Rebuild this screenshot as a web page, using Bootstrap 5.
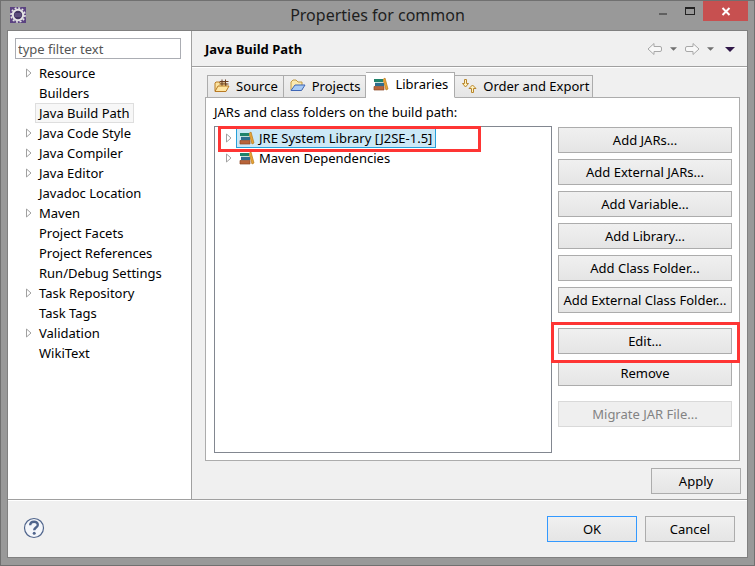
<!DOCTYPE html>
<html lang="en">
<head>
<meta charset="utf-8">
<meta name="viewport" content="width=device-width, initial-scale=1">
<title>Properties for common</title>
<link href="https://cdn.jsdelivr.net/npm/bootstrap@5.3.0/dist/css/bootstrap.min.css" rel="stylesheet">
<style>
body{font:13px/20px "Noto Sans","Open Sans",sans-serif;color:#000;background:#999}
.frame{min-height:100vh;background:#999;border:1px solid #707070;padding:0 6px 7px}
.titlebar{height:29px;padding:0 19px 0 3px}
.titlebar h1{font-size:16px;line-height:29px;color:#1e1e1e}
.winctl{border:0;background:none;padding:0;width:28px;height:20px;line-height:0}
.winctl.closer{background:#c75050;width:45px}
.winbox{top:0;right:0}
.dialog{background:#f0f0f0;border:1px solid #808080}
.side{width:184px;background:#fff;border-right:1px solid #a0a0a0;padding:7px 10px 0 7px;flex:none}
.filter{height:21px;border:1px solid #abadb3;border-radius:0;padding:0 2px;font-size:13px;line-height:19px;width:100%}
.filter::placeholder{color:#555;opacity:1}
.tree{padding-top:4px}
.tree li,.libs li{height:20px}
.twisty{width:20px;line-height:0;padding-left:11px;flex:none}
.libs .twisty{padding-left:10px}
.node{border:1px solid transparent;padding:0 3px;line-height:18px;color:#000;text-decoration:none;white-space:nowrap}
.node.current{background:#f7f7f7;border-color:#dedede}
.pagehead{height:36px;border-bottom:1px solid #a0a0a0;box-shadow:0 1px #fff;padding:1px 12px 0 13px}
.pagehead h2{font-size:13px;line-height:20px}
.pagehead button{border:0;background:none;padding:0;line-height:0}
.navset{gap:7px}
.page{padding:5px 6px 5px 13px}
.sheetwrap{padding-right:1px}
.tabs{padding-left:2px;margin-bottom:-1px;position:relative}
.tabs button{height:23px;border:1px solid #acacac;border-left-width:0;background:linear-gradient(#f0f0f0,#e5e5e5);padding:0 5px 1px 6px;display:flex;align-items:center;gap:6px;white-space:nowrap;color:#000}
.tabs button:first-child{border-left-width:1px}
.tabs button:last-child{padding-right:3px}
.tabs button.active{height:26px;background:#fff;border-bottom-color:#fff;padding:0 6px 3px 7px}
.sheet{background:#fff;border:1px solid #acacac;padding:4px 7px 7px 8px}
.libs{border:1px solid #828790;padding:1px 0 0 1px}
.libs .node{padding:0 3px 0 2px;display:flex;align-items:center;gap:4px;height:20px}
.libs .node.picked{background:#cbe8f6;border-color:#26a0da}
.workarea{gap:6px}
.actions{width:174px;gap:6px;flex:none;padding-top:1px}
.cmd{height:26px;border:1px solid #acacac;border-radius:0;background:linear-gradient(#f0f0f0,#e5e5e5);color:#000;padding:0;font-size:13px;line-height:20px;white-space:nowrap}
.cmd:disabled{background:#efefef;border-color:#d9d9d9;color:#838383;opacity:1}
.cmd.go{border-color:#3399ff}
.w90{width:90px}
.gap-top{margin-top:9px}
.applyrow{padding-top:7px}
.ring{position:absolute;border:3px solid #fe3534;pointer-events:none}
.ring-lib{left:4px;top:0;width:263px;height:26px;z-index:2}
.ring-edit{inset:-6px -8px -9px -7px}
.footer-bar{border-top:1px solid #a0a0a0;box-shadow:inset 0 1px #fff;height:58px;padding:0 12px 0 15px}
.help{border:0;background:none;padding:0 0 2px;line-height:0}
</style>
<script src="https://cdn.jsdelivr.net/npm/bootstrap@5.3.0/dist/js/bootstrap.bundle.min.js"></script>
</head>
<body>
<svg class="d-none" aria-hidden="true">
<symbol id="tw" viewBox="0 0 6 10"><path d="M.5 1v8L5 5z" fill="#fff" stroke="#a0a0a0"/></symbol>
<symbol id="books" viewBox="0 0 16 14"><path d="M10 2.500l2-1.500 3 11-2 1z" fill="#e8a536" stroke="#b87818" stroke-width=".7"/><path d="M1 2h9v3H1z" fill="#21836b"/><path d="M2 6h9v3H2z" fill="#2f6d8e"/><path d="M2 5.500h8" stroke="#b9d8d0" stroke-width=".8"/><path d="M1 9.500h10V13H1z" fill="#b8643a" stroke="#8b4522" stroke-width=".7"/></symbol>
<symbol id="back" viewBox="0 0 16 14"><path d="M1 7l6-5.500v3h6q1.500 0 1.500 1.500v2q0 1.500-1.500 1.500H7v3z" fill="#f8f8f8" stroke="#a8a8a8"/></symbol>
<symbol id="down" viewBox="0 0 8 4"><path d="M0 0h8L4 4z"/></symbol>
</svg>
<div class="frame d-flex flex-column">
<header class="titlebar d-flex position-relative">
<svg class="mt-1" width="16" height="20" viewBox="0 0 16 20"><path fill="#5b4381" d="M0 2h16v16H0z"/><circle cx="8" cy="10" r="7" fill="none" stroke="#e4e4e4" stroke-width="1.600" stroke-dasharray="2 1.660"/><circle cx="8" cy="10" r="5.200" fill="#41335f" stroke="#e4e4e4" stroke-width="2"/><path d="M4.500 9h7M4.500 11h7" stroke="#7b6a9c"/></svg>
<h1 class="flex-grow-1 text-center m-0 fw-normal">Properties for common</h1>
<div class="winbox position-absolute d-flex">
<button class="winctl" aria-label="Minimize"><svg width="28" height="20"><path d="M12 12h8v2h-8z" fill="#606060"/></svg></button>
<button class="winctl" aria-label="Maximize"><svg width="28" height="20"><path d="M10 6h10v8H10zM11 8v5h8V8z" fill="#222" fill-rule="evenodd"/></svg></button>
<button class="winctl closer" aria-label="Close"><svg width="45" height="20"><path d="M19.500 7l7 7M26.500 7l-7 7" stroke="#fff" stroke-width="2"/></svg></button>
</div>
</header>
<main class="dialog d-flex flex-column flex-grow-1">
<div class="d-flex flex-grow-1">
<nav class="side" aria-label="Property pages">
<input class="filter d-block" type="text" placeholder="type filter text" aria-label="Filter">
<ul class="tree list-unstyled m-0">
<li class="d-flex align-items-center"><span class="twisty"><svg width="6" height="10"><use href="#tw"/></svg></span><a class="node" href="#">Resource</a></li>
<li class="d-flex align-items-center"><span class="twisty"></span><a class="node" href="#">Builders</a></li>
<li class="d-flex align-items-center"><span class="twisty"></span><a class="node current" href="#">Java Build Path</a></li>
<li class="d-flex align-items-center"><span class="twisty"><svg width="6" height="10"><use href="#tw"/></svg></span><a class="node" href="#">Java Code Style</a></li>
<li class="d-flex align-items-center"><span class="twisty"><svg width="6" height="10"><use href="#tw"/></svg></span><a class="node" href="#">Java Compiler</a></li>
<li class="d-flex align-items-center"><span class="twisty"><svg width="6" height="10"><use href="#tw"/></svg></span><a class="node" href="#">Java Editor</a></li>
<li class="d-flex align-items-center"><span class="twisty"></span><a class="node" href="#">Javadoc Location</a></li>
<li class="d-flex align-items-center"><span class="twisty"><svg width="6" height="10"><use href="#tw"/></svg></span><a class="node" href="#">Maven</a></li>
<li class="d-flex align-items-center"><span class="twisty"></span><a class="node" href="#">Project Facets</a></li>
<li class="d-flex align-items-center"><span class="twisty"></span><a class="node" href="#">Project References</a></li>
<li class="d-flex align-items-center"><span class="twisty"></span><a class="node" href="#">Run/Debug Settings</a></li>
<li class="d-flex align-items-center"><span class="twisty"><svg width="6" height="10"><use href="#tw"/></svg></span><a class="node" href="#">Task Repository</a></li>
<li class="d-flex align-items-center"><span class="twisty"></span><a class="node" href="#">Task Tags</a></li>
<li class="d-flex align-items-center"><span class="twisty"><svg width="6" height="10"><use href="#tw"/></svg></span><a class="node" href="#">Validation</a></li>
<li class="d-flex align-items-center"><span class="twisty"></span><a class="node" href="#">WikiText</a></li>
</ul>
</nav>
<section class="flex-grow-1 d-flex flex-column">
<div class="pagehead d-flex align-items-center">
<h2 class="m-0 fw-bold flex-grow-1">Java Build Path</h2>
<div class="navset d-flex align-items-center">
<button aria-label="Back"><svg width="16" height="14"><use href="#back"/></svg></button>
<button aria-label="Back history"><svg width="7" height="4" fill="#707070"><use href="#down"/></svg></button>
<button aria-label="Forward"><svg width="16" height="14"><use href="#back" transform="matrix(-1 0 0 1 16 0)"/></svg></button>
<button aria-label="Forward history"><svg width="7" height="4" fill="#707070"><use href="#down"/></svg></button>
<button class="ms-1" aria-label="View menu"><svg width="10" height="5" fill="#301848"><use href="#down"/></svg></button>
</div>
</div>
<div class="page flex-grow-1 d-flex flex-column">
<div class="sheetwrap flex-grow-1 d-flex flex-column">
<div class="tabs d-flex align-items-end" role="tablist">
<button role="tab"><svg width="16" height="14" viewBox="0 0 16 14"><path d="M1 12V4l1-1h3l1 1h6v8z" fill="#fbe3a0" stroke="#b87a24"/><path d="M5.500 2.500h9M5.500 5h9M8 .5V7M11.500 .5V7" stroke="#6b3f22"/><path d="M1 12.500L4 7h11l-3 5.500z" fill="#ffe6a4" stroke="#b87a24"/></svg>Source</button>
<button role="tab"><svg width="16" height="14" viewBox="0 0 16 14"><path d="M1 11V3l2-2h3l2 2h4v8z" fill="#fbe9ae" stroke="#c09a44"/><path d="M1 11.500L5 6h10l-3.500 5.500z" fill="#a8cbf5" stroke="#3f66b5"/></svg>Projects</button>
<button role="tab" class="active" aria-selected="true"><svg width="16" height="14"><use href="#books"/></svg>Libraries</button>
<button role="tab"><svg width="16" height="16" viewBox="0 0 16 16" fill="#fff2c0" stroke="#b8862d"><path d="M3.500 1.500h2v4h2L4.500 9 1.500 5.500h2z"/><path d="M10.500 14.500h2v-4h2.500L11.500 7 8 10.500h2.500z"/></svg>Order and Export</button>
</div>
<div class="sheet flex-grow-1 d-flex flex-column">
<div class="mb-1" id="cap">JARs and class folders on the build path:</div>
<div class="workarea d-flex flex-grow-1 position-relative">
<ul class="libs list-unstyled m-0 flex-grow-1" aria-labelledby="cap">
<li class="d-flex align-items-center"><span class="twisty"><svg width="6" height="10"><use href="#tw"/></svg></span><a class="node picked" href="#"><svg width="16" height="14"><use href="#books"/></svg>JRE System Library [J2SE-1.5]</a></li>
<li class="d-flex align-items-center"><span class="twisty"><svg width="6" height="10"><use href="#tw"/></svg></span><a class="node" href="#"><svg width="16" height="14"><use href="#books"/></svg>Maven Dependencies</a></li>
</ul>
<span class="ring ring-lib"></span>
<div class="actions d-flex flex-column">
<button class="btn cmd">Add JARs...</button>
<button class="btn cmd">Add External JARs...</button>
<button class="btn cmd">Add Variable...</button>
<button class="btn cmd">Add Library...</button>
<button class="btn cmd">Add Class Folder...</button>
<button class="btn cmd">Add External Class Folder...</button>
<div class="position-relative gap-top d-grid z-1"><button class="btn cmd">Edit...</button><span class="ring ring-edit"></span></div>
<button class="btn cmd">Remove</button>
<button class="btn cmd gap-top" disabled>Migrate JAR File...</button>
</div>
</div>
</div>
</div>
<div class="applyrow d-flex justify-content-end"><button class="btn cmd w90">Apply</button></div>
</div>
</section>
</div>
<footer class="footer-bar d-flex align-items-center">
<button class="help me-auto" aria-label="Help"><svg width="22" height="22" viewBox="0 0 22 22"><circle cx="11" cy="11" r="9.500" fill="#f4f6fa" stroke="#50658c" stroke-width="1.200"/><path d="M7.200 8.300C7.200 3.500 15 3.700 14.800 8c-.1 2.500-3.600 2.600-3.600 5.200" fill="none" stroke="#50658c" stroke-width="2.400"/><circle cx="11.200" cy="16.300" r="1.500" fill="#50658c"/></svg></button>
<div class="d-flex gap-2"><button class="btn cmd go w90">OK</button><button class="btn cmd w90">Cancel</button></div>
</footer>
</main>
</div>
</body>
</html>
